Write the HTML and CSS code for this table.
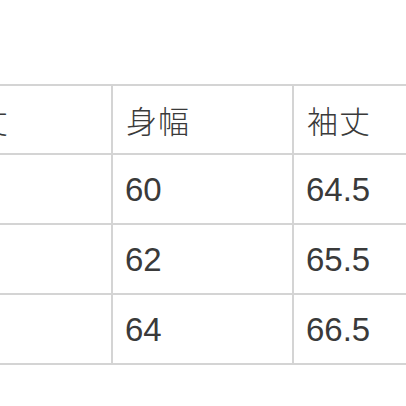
FILE: index.html
```html
<!DOCTYPE html>
<html lang="ja">
<head>
<meta charset="utf-8">
<link rel="stylesheet" href="styles.css">
</head>
<body>
<div class="page">
  <table class="size-table">
    <colgroup>
      <col class="col"><col class="col"><col class="col"><col class="col">
    </colgroup>
    <tr class="head"><td>着丈</td><td>身幅</td><td>袖丈</td><td></td></tr>
    <tr><td></td><td>60</td><td>64.5</td><td></td></tr>
    <tr><td></td><td>62</td><td>65.5</td><td></td></tr>
    <tr><td></td><td>64</td><td>66.5</td><td></td></tr>
  </table>
</div>
</body>
</html>
```
FILE: styles.css
```css
html, body {
  margin: 0;
  padding: 0;
  background: #ffffff;
  overflow: hidden;
}
.page {
  padding-top: 84px;
  margin-left: -70px;
  width: 800px;
}
.size-table {
  border-collapse: collapse;
  table-layout: fixed;
  width: 724px;
}
.col {
  width: 181px;
}
.size-table td {
  border: 2px solid #d4d4d4;
  height: 68px;
  padding: 0 0 0 12px;
  box-sizing: border-box;
  font-family: "Liberation Sans", "Noto Sans CJK JP", sans-serif;
  font-size: 33px;
  color: #3a3a3a;
  vertical-align: middle;
  white-space: nowrap;
  line-height: 1;
}
.size-table .head td {
  height: 69px;
  font-family: "Noto Sans CJK JP", sans-serif;
  font-size: 31px;
  font-weight: 300;
  letter-spacing: 1px;
  padding-left: 13px;
}
.size-table tr:not(.head) td {
  height: 70px;
}
```
